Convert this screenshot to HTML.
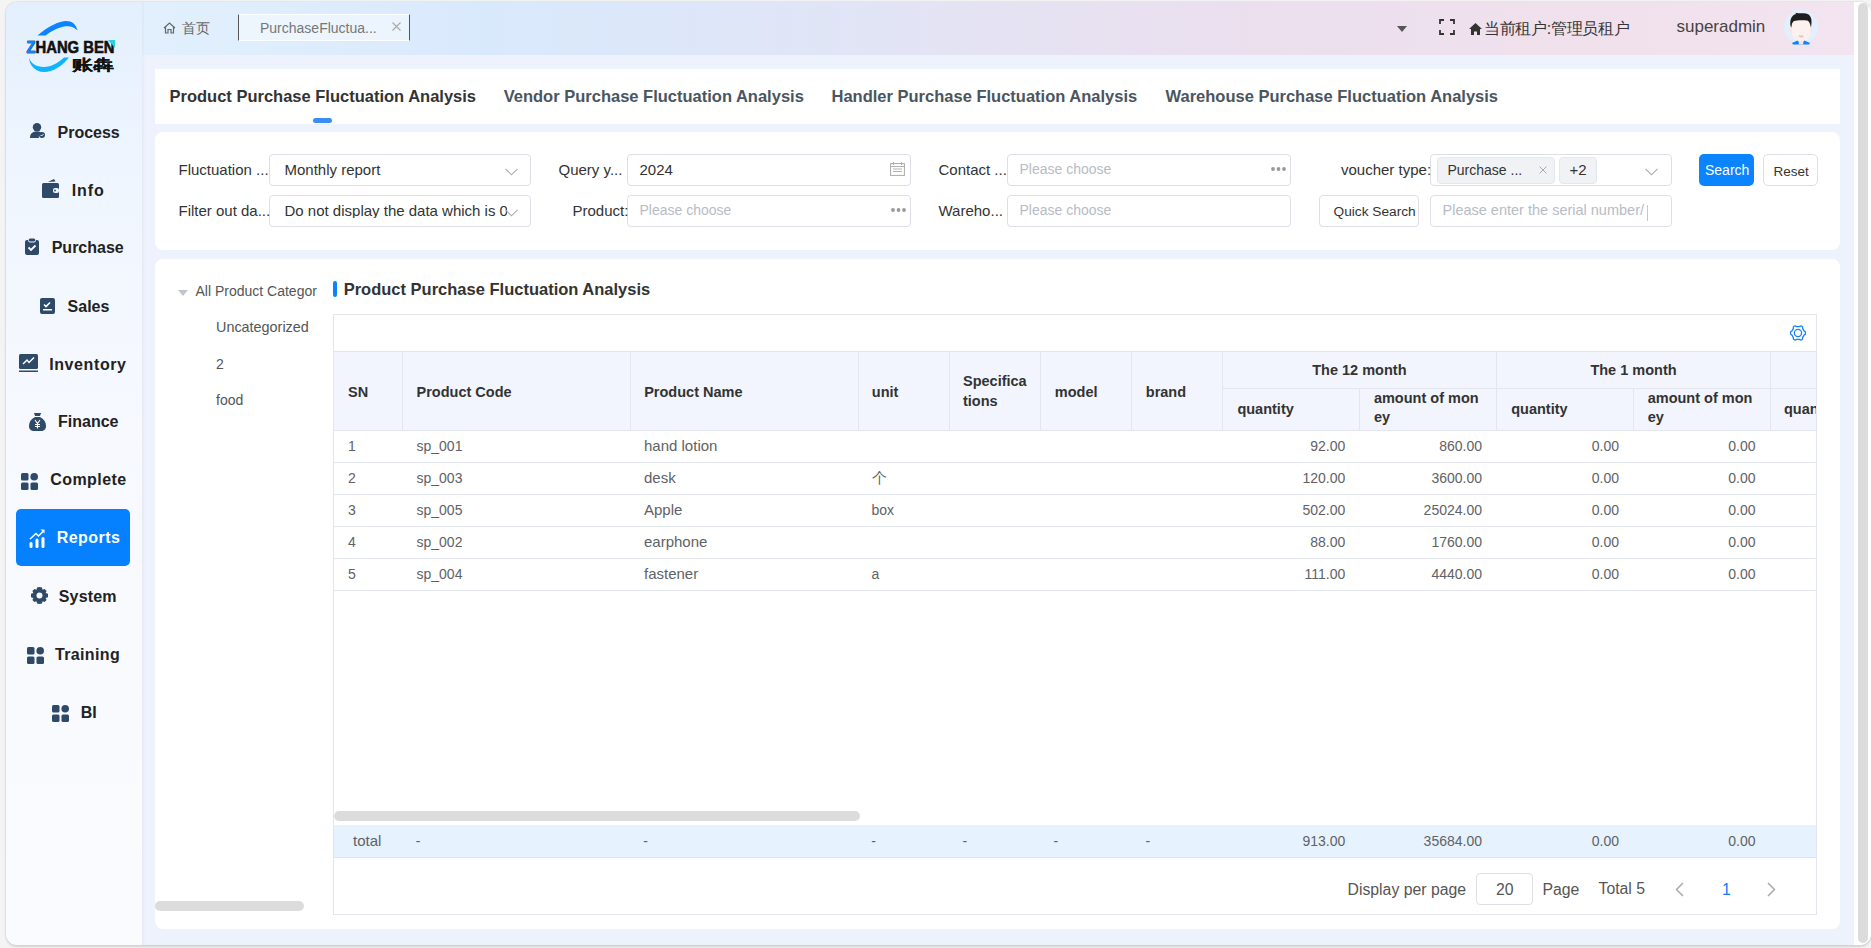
<!DOCTYPE html>
<html><head><meta charset="utf-8">
<style>
*{box-sizing:border-box;margin:0;padding:0}
html,body{width:1871px;height:948px;overflow:hidden;background:#f4f4f4;font-family:"Liberation Sans",sans-serif;color:#333}
.abs{position:absolute}
.t{position:absolute;white-space:nowrap;line-height:1}
#app{position:absolute;left:6px;top:2px;width:1865px;height:943px;border-radius:11px;background:#fff;box-shadow:0 0 1.2px rgba(0,0,0,.28),0 1.5px 3px rgba(0,0,0,.12)}
</style></head><body>
<div id="app"></div>
<div class="abs" style="left:6px;top:2px;width:136px;height:943px;background:linear-gradient(180deg,#e3effd 0%,#eaf3fe 10%,#f0f6fe 20%,#f5f8fe 38%,#f8fafe 60%,#f9fbfe 100%);border-radius:11px 0 0 11px"></div>
<div class="abs" style="left:142px;top:2px;width:1712px;height:53px;background:linear-gradient(90deg,#e2f0fd 0px,#d9e9fc 350px,#e2e4f5 760px,#ebdfee 1100px,#f1e1ec 1500px,#f2e4f0 1712px)"></div>
<div class="abs" style="left:142px;top:55px;width:1712px;height:890px;background:#eef2fc"></div>
<div class="abs" style="left:142px;top:2px;width:3px;height:943px;background:linear-gradient(90deg,rgba(0,0,0,.04),rgba(0,0,0,0))"></div>
<div class="abs" style="left:1854px;top:2px;width:17px;height:943px;background:#fff;border-radius:0 11px 11px 0"></div>
<div class="abs" style="left:1858px;top:3px;width:10px;height:940px;background:#dcdcdc;border-radius:5px"></div>
<div class="abs" style="left:155px;top:69px;width:1685px;height:55px;background:#fff"></div>
<div class="abs" style="left:155px;top:132px;width:1685px;height:118px;background:#fff;border-radius:8px"></div>
<div class="abs" style="left:155px;top:259px;width:1685px;height:670px;background:#fff;border-radius:8px"></div>
<svg class="abs" style="left:20px;top:15px" width="105" height="65" viewBox="0 0 105 65">
<path d="M17.5 20.5 C 28 11, 40 6, 46 6 C 52 6, 56 9, 57.5 15.5 C 54 11.5, 49 10.5, 44 11.5 C 37 13, 30 17, 25.5 20.5 Z" fill="#0a84ff"/>
<path d="M9 42 C 9 50, 15 57, 24 57 C 34 57, 43 50, 49 42.5 L 44 42.5 C 38 48, 31 52, 24 52 C 16 52, 10 48, 9 42 Z" fill="#10b4fb"/>
<text x="6.5" y="38" font-family="Liberation Sans" font-weight="bold" font-size="17" textLength="88" lengthAdjust="spacingAndGlyphs" fill="#111" stroke="#111" stroke-width="0.6">ZHANG BEN</text>
<text x="6.5" y="38" font-family="Liberation Sans" font-weight="bold" font-size="17" textLength="88" lengthAdjust="spacingAndGlyphs" fill="#0a84ff" stroke="#0a84ff" stroke-width="0.6" clip-path="url(#zc)">ZHANG BEN</text>
<clipPath id="zc"><rect x="0" y="0" width="15" height="65"/></clipPath>
<path d="M88 25 L95 25 L95 33 Z" fill="#2ccfdc"/>
<text x="52" y="54.5" font-family="Liberation Sans" font-weight="bold" font-size="14.5" textLength="42" lengthAdjust="spacingAndGlyphs" fill="#111" stroke="#111" stroke-width="0.15">账犇</text>
</svg>
<div class="abs" style="left:16px;top:509px;width:114px;height:57px;background:#0580fe;border-radius:5px"></div>
<div class="t" style="left:57.5px;top:124.8px;font-size:16px;font-weight:bold;color:#222;letter-spacing:0px">Process</div>
<svg class="abs" style="left:30px;top:123px" width="16" height="15" viewBox="0 0 16 15"><circle cx="7" cy="4.2" r="4.2" fill="#2e4a68"/><path d="M0 15 C0 10,3 8.5,7 8.5 C9 8.5,10.5 9,11.5 9.8 A4 4 0 0 0 9 15 Z" fill="#2e4a68"/><circle cx="12" cy="12" r="3" fill="#2e4a68"/><path d="M10.6 12 l1 1 l1.8 -1.8" stroke="#fff" stroke-width="1" fill="none"/></svg>
<div class="t" style="left:71.8px;top:182.5px;font-size:16px;font-weight:bold;color:#222;letter-spacing:0.85px">Info</div>
<svg class="abs" style="left:42.2px;top:178.6px" width="17" height="19" viewBox="0 0 17 19"><path d="M6 3 L12 0 L13.5 2.5 Z" fill="#2e4a68"/><rect x="0" y="4" width="17" height="15" rx="1.5" fill="#2e4a68"/><rect x="11" y="9" width="6" height="5" rx="2" fill="#f3f7fe"/><circle cx="13" cy="11.5" r="0.9" fill="#2e4a68"/></svg>
<div class="t" style="left:51.7px;top:240.2px;font-size:16px;font-weight:bold;color:#222;letter-spacing:0px">Purchase</div>
<svg class="abs" style="left:25.3px;top:238.2px" width="14" height="17" viewBox="0 0 14 17"><rect x="0" y="2" width="14" height="15" rx="2" fill="#2e4a68"/><rect x="3.5" y="0" width="7" height="4" rx="1.5" fill="#2e4a68" stroke="#f3f7fe" stroke-width="1"/><path d="M3.5 9.5 l2.5 2.5 l4.5 -4.5" stroke="#fff" stroke-width="1.8" fill="none"/></svg>
<div class="t" style="left:67.6px;top:298.5px;font-size:16px;font-weight:bold;color:#222;letter-spacing:0px">Sales</div>
<svg class="abs" style="left:40px;top:297.8px" width="15" height="16" viewBox="0 0 15 16"><rect x="0" y="0" width="15" height="16" rx="2" fill="#2e4a68"/><path d="M4 6.5 l2 2 l4 -4" stroke="#fff" stroke-width="1.6" fill="none"/><rect x="3" y="11" width="9" height="1.5" fill="#fff"/></svg>
<div class="t" style="left:49.2px;top:356.9px;font-size:16px;font-weight:bold;color:#222;letter-spacing:0.6px">Inventory</div>
<svg class="abs" style="left:19.3px;top:354.4px" width="19" height="18" viewBox="0 0 19 18"><rect x="0" y="0" width="19" height="15" rx="1.5" fill="#2e4a68"/><path d="M4 10 l4 -4 l2 2.5 l5 -5" stroke="#fff" stroke-width="1.5" fill="none"/><rect x="0" y="16.5" width="19" height="1.5" fill="#2e4a68"/></svg>
<div class="t" style="left:58.0px;top:414.3px;font-size:16px;font-weight:bold;color:#222;letter-spacing:0px">Finance</div>
<svg class="abs" style="left:29.4px;top:412.6px" width="17" height="18" viewBox="0 0 17 18"><path d="M5 0 L12 0 L11 3 L6 3 Z" fill="#2e4a68"/><path d="M6 4 L11 4 C15 6,17 9,17 13 C17 16.5,15 18,12 18 L5 18 C2 18,0 16.5,0 13 C0 9,2 6,6 4 Z" fill="#2e4a68"/><path d="M6 7 l2.5 3.5 l2.5 -3.5 M8.5 10.5 v5 M6 11.5 h5 M6 13.5 h5" stroke="#fff" stroke-width="1.1" fill="none"/></svg>
<div class="t" style="left:50.2px;top:471.7px;font-size:16px;font-weight:bold;color:#222;letter-spacing:0.45px">Complete</div>
<svg class="abs" style="left:21px;top:473px" width="17" height="17" viewBox="0 0 17 17"><rect x="0" y="0" width="7.5" height="7.5" rx="1.5" fill="#2e4a68"/><circle cx="13.2" cy="3.8" r="3.8" fill="#2e4a68"/><rect x="0" y="9.5" width="7.5" height="7.5" rx="1.5" fill="#2e4a68"/><rect x="9.5" y="9.5" width="7.5" height="7.5" rx="1.5" fill="#2e4a68"/></svg>
<div class="t" style="left:56.7px;top:530.4px;font-size:16px;font-weight:bold;color:#fff;letter-spacing:0.45px">Reports</div>
<svg class="abs" style="left:28.6px;top:529px" width="16" height="19" viewBox="0 0 16 19"><path d="M1 10 L7 4.5 L9.5 7 L15 1.5" stroke="#fff" stroke-width="1.5" fill="none"/><path d="M11.5 0.5 L15.5 0.5 L15.5 4.5 Z" fill="#fff"/><rect x="0.5" y="13" width="3" height="6" rx="1.5" fill="#fff"/><rect x="6.5" y="9.5" width="3" height="9.5" rx="1.5" fill="#fff"/><rect x="12.5" y="8" width="3" height="11" rx="1.5" fill="#fff"/></svg>
<div class="t" style="left:58.8px;top:588.9px;font-size:16px;font-weight:bold;color:#222;letter-spacing:0.15px">System</div>
<svg class="abs" style="left:30.6px;top:587.2px" width="17" height="17" viewBox="0 0 17 17"><path d="M8.5 0 L11 0.6 L11.5 2.8 L13.6 2 L15.6 3.9 L14.6 6 L17 6.8 L17 10.2 L14.6 11 L15.6 13.1 L13.6 15 L11.5 14.2 L11 16.4 L8.5 17 L6 16.4 L5.5 14.2 L3.4 15 L1.4 13.1 L2.4 11 L0 10.2 L0 6.8 L2.4 6 L1.4 3.9 L3.4 2 L5.5 2.8 L6 0.6 Z" fill="#2e4a68"/><circle cx="8.5" cy="8.5" r="3" fill="#f6f9fe"/></svg>
<div class="t" style="left:54.9px;top:647.3px;font-size:16px;font-weight:bold;color:#222;letter-spacing:0.38px">Training</div>
<svg class="abs" style="left:26.5px;top:647.3px" width="17" height="17" viewBox="0 0 17 17"><rect x="0" y="0" width="7.5" height="7.5" rx="1.5" fill="#2e4a68"/><circle cx="13.2" cy="3.8" r="3.8" fill="#2e4a68"/><rect x="0" y="9.5" width="7.5" height="7.5" rx="1.5" fill="#2e4a68"/><rect x="9.5" y="9.5" width="7.5" height="7.5" rx="1.5" fill="#2e4a68"/></svg>
<div class="t" style="left:80.8px;top:705.0px;font-size:16px;font-weight:bold;color:#222;letter-spacing:0px">BI</div>
<svg class="abs" style="left:51.9px;top:705px" width="17" height="17" viewBox="0 0 17 17"><rect x="0" y="0" width="7.5" height="7.5" rx="1.5" fill="#2e4a68"/><circle cx="13.2" cy="3.8" r="3.8" fill="#2e4a68"/><rect x="0" y="9.5" width="7.5" height="7.5" rx="1.5" fill="#2e4a68"/><rect x="9.5" y="9.5" width="7.5" height="7.5" rx="1.5" fill="#2e4a68"/></svg>
<svg class="abs" style="left:163px;top:22px" width="13" height="12" viewBox="0 0 13 12"><path d="M1 6 L6.5 1 L12 6 M2.5 5 V11 H5 V7.5 H8 V11 H10.5 V5" stroke="#666" stroke-width="1.2" fill="none"/></svg>
<div class="t" style="left:181.5px;top:20.8px;font-size:14px;font-weight:normal;color:#666;">首页</div>
<div class="abs" style="left:238px;top:14px;width:172px;height:27px;background:rgba(255,255,255,.45);border-left:1.5px solid #555;border-right:1.5px solid #555;border-top:1px solid rgba(255,255,255,.85);border-bottom:1px solid rgba(255,255,255,.85)"></div>
<div class="t" style="left:260.0px;top:20.8px;font-size:14px;font-weight:normal;color:#777;">PurchaseFluctua...</div>
<svg class="abs" style="left:392px;top:22px" width="9" height="9" viewBox="0 0 9 9"><path d="M0.5 0.5 L8.5 8.5 M8.5 0.5 L0.5 8.5" stroke="#aaa" stroke-width="1.1"/></svg>
<svg class="abs" style="left:1397px;top:26px" width="10" height="6" viewBox="0 0 10 6"><path d="M0 0 L10 0 L5 6 Z" fill="#555"/></svg>
<svg class="abs" style="left:1439px;top:19px" width="16" height="16" viewBox="0 0 16 16"><path d="M1 5 V1 H5 M11 1 H15 V5 M15 11 V15 H11 M5 15 H1 V11" stroke="#333" stroke-width="1.8" fill="none"/></svg>
<svg class="abs" style="left:1469px;top:23px" width="13" height="12" viewBox="0 0 13 12"><path d="M6.5 0 L13 6 L11 6 L11 12 L8 12 L8 8.5 L5 8.5 L5 12 L2 12 L2 6 L0 6 Z" fill="#333"/></svg>
<div class="t" style="left:1484.0px;top:20.9px;font-size:16px;font-weight:normal;color:#333;letter-spacing:-0.3px">当前租户:管理员租户</div>
<div class="t" style="left:1676.5px;top:18.3px;font-size:17px;font-weight:normal;color:#444;">superadmin</div>
<svg class="abs" style="left:1784px;top:10px" width="34" height="35" viewBox="0 0 34 35">
<circle cx="17" cy="17" r="17" fill="#e3effc"/>
<ellipse cx="7.6" cy="19.5" rx="1.8" ry="3" fill="#fde3e1"/><ellipse cx="26.4" cy="19.5" rx="1.8" ry="3" fill="#fde3e1"/>
<path d="M8 13 C8 8,12 9.5,17 9.5 C22 9.5,26 8,26 13 L26 23 C26 28,22 31.5,17 31.5 C12 31.5,8 28,8 23 Z" fill="#fdf1f0"/>
<path d="M6.5 16 C5.5 9,8 5,12 4 L11.5 2.8 C15 3.6,19 3,22 3.5 C26 4.2,28 8,27.5 13 L27 17.5 C26 13,25 11,23 10.5 C19 10,13 10,10 11 C8.5 12,7.5 14,7.5 17.5 Z" fill="#1e1e1e"/>
<path d="M14 25.5 Q17 29.5 20 25.5 Z" fill="#f7b9b3"/>
<path d="M8 33 L13.5 30.5 L17 34 L20.5 30.5 L26 33 L25 34.5 L9 34.5 Z" fill="#0a84ff"/>
<rect x="14.8" y="30.5" width="4.4" height="4" fill="#fde3e1"/>
</svg>
<div class="t" style="left:169.5px;top:88.2px;font-size:16.5px;font-weight:bold;color:#333;">Product Purchase Fluctuation Analysis</div>
<div class="t" style="left:503.7px;top:88.2px;font-size:16.5px;font-weight:bold;color:#4a5560;">Vendor Purchase Fluctuation Analysis</div>
<div class="t" style="left:831.5px;top:88.2px;font-size:16.5px;font-weight:bold;color:#4a5560;">Handler Purchase Fluctuation Analysis</div>
<div class="t" style="left:1165.5px;top:88.2px;font-size:16.5px;font-weight:bold;color:#4a5560;">Warehouse Purchase Fluctuation Analysis</div>
<div class="abs" style="left:312.5px;top:118px;width:19px;height:5px;background:#3b8cf6;border-radius:3px"></div>
<div class="abs" style="left:269px;top:154px;width:262px;height:32px;border:1px solid #dcdfe6;border-radius:4px;background:#fff;"></div>
<div class="abs" style="left:269px;top:195px;width:262px;height:32px;border:1px solid #dcdfe6;border-radius:4px;background:#fff;"></div>
<div class="t" style="left:178.5px;top:162.4px;font-size:15px;font-weight:normal;color:#333;">Fluctuation ...</div>
<div class="t" style="left:178.5px;top:203.1px;font-size:15px;font-weight:normal;color:#333;">Filter out da...</div>
<div class="t" style="left:284.5px;top:162.4px;font-size:15px;font-weight:normal;color:#333;">Monthly report</div>
<div class="t" style="left:284.5px;top:203.1px;width:222px;overflow:hidden;font-size:15px;color:#333">Do not display the data which is 0</div>
<svg class="abs" style="left:505px;top:167.5px" width="13" height="8" viewBox="0 0 13 8"><path d="M0.5 0.8 L6.5 6.8 L12.5 0.8" stroke="#aaa" stroke-width="1.1" fill="none"/></svg>
<svg class="abs" style="left:505px;top:208.5px" width="13" height="8" viewBox="0 0 13 8"><path d="M0.5 0.8 L6.5 6.8 L12.5 0.8" stroke="#aaa" stroke-width="1.1" fill="none"/></svg>
<div class="abs" style="left:627px;top:154px;width:284px;height:32px;border:1px solid #dcdfe6;border-radius:4px;background:#fff;"></div>
<div class="abs" style="left:627px;top:195px;width:284px;height:32px;border:1px solid #dcdfe6;border-radius:4px;background:#fff;"></div>
<div class="t" style="left:558.5px;top:162.4px;font-size:15px;font-weight:normal;color:#333;">Query y...</div>
<div class="t" style="left:572.5px;top:203.1px;font-size:15px;font-weight:normal;color:#333;">Product:</div>
<div class="t" style="left:639.5px;top:162.4px;font-size:15px;font-weight:normal;color:#333;">2024</div>
<div class="t" style="left:639.5px;top:203.4px;font-size:14px;font-weight:normal;color:#b7bcc5;">Please choose</div>
<svg class="abs" style="left:890px;top:162px" width="15" height="14" viewBox="0 0 15 14"><rect x="0.6" y="1.6" width="13.8" height="11.8" stroke="#aaa" stroke-width="1" fill="none"/><path d="M0.6 4.5 H14.4 M3 7 H12 M3 9.5 H12 M3.5 0 V3 M11.5 0 V3" stroke="#aaa" stroke-width="0.9"/></svg>
<svg class="abs" style="left:890.5px;top:208.3px" width="15" height="4" viewBox="0 0 15 4"><circle cx="2" cy="2" r="1.9" fill="#999"/><circle cx="7.5" cy="2" r="1.9" fill="#999"/><circle cx="13" cy="2" r="1.9" fill="#999"/></svg>
<div class="abs" style="left:1007px;top:154px;width:284px;height:32px;border:1px solid #dcdfe6;border-radius:4px;background:#fff;"></div>
<div class="abs" style="left:1007px;top:195px;width:284px;height:32px;border:1px solid #dcdfe6;border-radius:4px;background:#fff;"></div>
<div class="t" style="left:938.5px;top:162.4px;font-size:15px;font-weight:normal;color:#333;">Contact ...</div>
<div class="t" style="left:938.5px;top:203.1px;font-size:15px;font-weight:normal;color:#333;">Wareho...</div>
<div class="t" style="left:1019.5px;top:162.4px;font-size:14px;font-weight:normal;color:#b7bcc5;">Please choose</div>
<div class="t" style="left:1019.5px;top:203.3px;font-size:14px;font-weight:normal;color:#b7bcc5;">Please choose</div>
<svg class="abs" style="left:1270.5px;top:167.3px" width="15" height="4" viewBox="0 0 15 4"><circle cx="2" cy="2" r="1.9" fill="#999"/><circle cx="7.5" cy="2" r="1.9" fill="#999"/><circle cx="13" cy="2" r="1.9" fill="#999"/></svg>
<div class="abs" style="left:1430px;top:154px;width:242px;height:32px;border:1px solid #dcdfe6;border-radius:4px;background:#fff;"></div>
<div class="abs" style="left:1430px;top:195px;width:242px;height:32px;border:1px solid #dcdfe6;border-radius:4px;background:#fff;"></div>
<div class="t" style="left:1341.0px;top:162.4px;font-size:15px;font-weight:normal;color:#333;">voucher type:</div>
<div class="abs" style="left:1437px;top:157px;width:118px;height:27px;background:#f0f2f5;border:1px solid #e4e7ed;border-radius:4px"></div>
<div class="t" style="left:1447.5px;top:163.2px;font-size:14px;font-weight:normal;color:#333;">Purchase ...</div>
<svg class="abs" style="left:1538.5px;top:166px" width="8" height="8" viewBox="0 0 8 8"><path d="M0.5 0.5 L7.5 7.5 M7.5 0.5 L0.5 7.5" stroke="#aaa" stroke-width="1"/></svg>
<div class="abs" style="left:1559px;top:157px;width:38px;height:27px;background:#f0f2f5;border:1px solid #e4e7ed;border-radius:4px"></div>
<div class="t" style="left:1569.5px;top:162.4px;font-size:15px;font-weight:normal;color:#333;">+2</div>
<svg class="abs" style="left:1645px;top:167.5px" width="13" height="8" viewBox="0 0 13 8"><path d="M0.5 0.8 L6.5 6.8 L12.5 0.8" stroke="#aaa" stroke-width="1.1" fill="none"/></svg>
<div class="abs" style="left:1319px;top:195px;width:100px;height:32px;border:1px solid #dcdfe6;border-radius:4px;background:#fff"></div>
<div class="t" style="left:1333.5px;top:205.2px;font-size:13.7px;font-weight:normal;color:#333;">Quick Search</div>
<div class="t" style="left:1442.5px;top:202.5px;font-size:14.5px;color:#b7bcc5">Please enter the serial number/</div>
<div class="abs" style="left:1647px;top:205px;width:1px;height:16px;background:#c8c8c8"></div>
<div class="abs" style="left:1699px;top:154px;width:55px;height:32px;background:#0a84ff;border-radius:5px"></div>
<div class="t" style="left:1705.0px;top:162.9px;font-size:14px;font-weight:normal;color:#fff;">Search</div>
<div class="abs" style="left:1763px;top:154px;width:55px;height:32px;border:1px solid #dcdfe6;border-radius:5px;background:#fff"></div>
<div class="t" style="left:1773.5px;top:164.7px;font-size:13.5px;font-weight:normal;color:#333;">Reset</div>
<svg class="abs" style="left:177.5px;top:289.5px" width="10" height="6" viewBox="0 0 10 6"><path d="M0 0 L10 0 L5 6 Z" fill="#c0c4cc"/></svg>
<div class="t" style="left:195.5px;top:284.2px;font-size:14px;color:#555">All Product Categor</div>
<div class="t" style="left:216.0px;top:319.5px;font-size:14.4px;font-weight:normal;color:#555;">Uncategorized</div>
<div class="t" style="left:216.0px;top:356.5px;font-size:14px;font-weight:normal;color:#555;">2</div>
<div class="t" style="left:216.0px;top:392.9px;font-size:14px;font-weight:normal;color:#555;">food</div>
<div class="abs" style="left:155px;top:901px;width:149px;height:10px;background:#dcdcdc;border-radius:5px"></div>
<div class="abs" style="left:333px;top:281px;width:4px;height:16px;background:#0a84ff;border-radius:2px"></div>
<div class="t" style="left:343.7px;top:280.9px;font-size:16.5px;font-weight:bold;color:#333;">Product Purchase Fluctuation Analysis</div>
<div class="abs" style="left:333px;top:314px;width:1484px;height:601px;border:1px solid #e3e6ef;background:#fff"></div>
<svg class="abs" style="left:1789px;top:324px" width="18" height="18" viewBox="0 0 18 18"><path d="M6.2 1.8 L7.6 2.6 L10.4 2.6 L11.8 1.8 L13.6 2.8 L13.6 4.4 L15 6.9 L16.4 7.7 L16.4 10.3 L15 11.1 L13.6 13.6 L13.6 15.2 L11.8 16.2 L10.4 15.4 L7.6 15.4 L6.2 16.2 L4.4 15.2 L4.4 13.6 L3 11.1 L1.6 10.3 L1.6 7.7 L3 6.9 L4.4 4.4 L4.4 2.8 Z" stroke="#1a82f7" stroke-width="1.3" fill="none" stroke-linejoin="round"/><circle cx="9" cy="9" r="3.6" stroke="#1a82f7" stroke-width="1.3" fill="none"/></svg>
<div class="abs" style="left:334px;top:351px;width:1482px;height:80px;background:#f2f5fd;border-top:1px solid #e3e6ef;border-bottom:1px solid #e3e6ef"></div>
<div class="abs" style="left:402px;top:351px;width:1px;height:80px;background:#e3e6ef"></div>
<div class="abs" style="left:630px;top:351px;width:1px;height:80px;background:#e3e6ef"></div>
<div class="abs" style="left:858px;top:351px;width:1px;height:80px;background:#e3e6ef"></div>
<div class="abs" style="left:949px;top:351px;width:1px;height:80px;background:#e3e6ef"></div>
<div class="abs" style="left:1040px;top:351px;width:1px;height:80px;background:#e3e6ef"></div>
<div class="abs" style="left:1131px;top:351px;width:1px;height:80px;background:#e3e6ef"></div>
<div class="abs" style="left:1222px;top:351px;width:1px;height:80px;background:#e3e6ef"></div>
<div class="abs" style="left:1359px;top:351px;width:1px;height:80px;background:#e3e6ef"></div>
<div class="abs" style="left:1496px;top:351px;width:1px;height:80px;background:#e3e6ef"></div>
<div class="abs" style="left:1633px;top:351px;width:1px;height:80px;background:#e3e6ef"></div>
<div class="abs" style="left:1770px;top:351px;width:1px;height:80px;background:#e3e6ef"></div>
<div class="abs" style="left:1222px;top:388px;width:594px;height:1px;background:#e3e6ef"></div>
<div class="abs" style="left:1359px;top:352px;width:1px;height:36px;background:#f2f5fd"></div>
<div class="abs" style="left:1633px;top:352px;width:1px;height:36px;background:#f2f5fd"></div>
<div class="t" style="left:348.0px;top:384.9px;font-size:14.5px;font-weight:bold;color:#333;">SN</div>
<div class="t" style="left:416.5px;top:384.9px;font-size:14.5px;font-weight:bold;color:#333;">Product Code</div>
<div class="t" style="left:644.2px;top:384.9px;font-size:14.5px;font-weight:bold;color:#333;">Product Name</div>
<div class="t" style="left:871.8px;top:384.9px;font-size:14.5px;font-weight:bold;color:#333;">unit</div>
<div class="t" style="left:963.0px;top:374.1px;font-size:14.5px;font-weight:bold;color:#333;">Specifica</div>
<div class="t" style="left:963.0px;top:393.6px;font-size:14.5px;font-weight:bold;color:#333;">tions</div>
<div class="t" style="left:1054.8px;top:384.9px;font-size:14.5px;font-weight:bold;color:#333;">model</div>
<div class="t" style="left:1145.8px;top:384.9px;font-size:14.5px;font-weight:bold;color:#333;">brand</div>
<div class="t" style="left:1059.4px;width:600px;text-align:center;top:362.9px;font-size:14.5px;font-weight:bold;color:#333;">The 12 month</div>
<div class="t" style="left:1333.5px;width:600px;text-align:center;top:362.9px;font-size:14.5px;font-weight:bold;color:#333;">The 1 month</div>
<div class="t" style="left:1237.4px;top:402.2px;font-size:14.5px;font-weight:bold;color:#333;">quantity</div>
<div class="t" style="left:1373.9px;top:391.3px;font-size:14.5px;font-weight:bold;color:#333;">amount of mon</div>
<div class="t" style="left:1373.9px;top:410.4px;font-size:14.5px;font-weight:bold;color:#333;">ey</div>
<div class="t" style="left:1511.2px;top:402.2px;font-size:14.5px;font-weight:bold;color:#333;">quantity</div>
<div class="t" style="left:1647.7px;top:391.3px;font-size:14.5px;font-weight:bold;color:#333;">amount of mon</div>
<div class="t" style="left:1647.7px;top:410.4px;font-size:14.5px;font-weight:bold;color:#333;">ey</div>
<div class="t" style="left:1784px;top:402.2px;width:32px;overflow:hidden;font-size:14.5px;font-weight:bold;color:#333">quantity</div>
<div class="abs" style="left:334px;top:462px;width:1482px;height:1px;background:#e3e6ef"></div>
<div class="t" style="left:348.0px;top:438.7px;font-size:14px;font-weight:normal;color:#606266;">1</div>
<div class="t" style="left:416.5px;top:438.7px;font-size:14px;font-weight:normal;color:#606266;">sp_001</div>
<div class="t" style="left:644.0px;top:437.9px;font-size:15px;font-weight:normal;color:#606266;">hand lotion</div>
<div class="t" style="right:525.7px;top:438.7px;font-size:14px;font-weight:normal;color:#606266;">92.00</div>
<div class="t" style="right:389.0px;top:438.7px;font-size:14px;font-weight:normal;color:#606266;">860.00</div>
<div class="t" style="right:252.0px;top:438.7px;font-size:14px;font-weight:normal;color:#606266;">0.00</div>
<div class="t" style="right:115.5px;top:438.7px;font-size:14px;font-weight:normal;color:#606266;">0.00</div>
<div class="abs" style="left:334px;top:494px;width:1482px;height:1px;background:#e3e6ef"></div>
<div class="t" style="left:348.0px;top:470.7px;font-size:14px;font-weight:normal;color:#606266;">2</div>
<div class="t" style="left:416.5px;top:470.7px;font-size:14px;font-weight:normal;color:#606266;">sp_003</div>
<div class="t" style="left:644.0px;top:469.9px;font-size:15px;font-weight:normal;color:#606266;">desk</div>
<div class="t" style="left:871.5px;top:469.9px;font-size:15px;font-weight:normal;color:#606266;">个</div>
<div class="t" style="right:525.7px;top:470.7px;font-size:14px;font-weight:normal;color:#606266;">120.00</div>
<div class="t" style="right:389.0px;top:470.7px;font-size:14px;font-weight:normal;color:#606266;">3600.00</div>
<div class="t" style="right:252.0px;top:470.7px;font-size:14px;font-weight:normal;color:#606266;">0.00</div>
<div class="t" style="right:115.5px;top:470.7px;font-size:14px;font-weight:normal;color:#606266;">0.00</div>
<div class="abs" style="left:334px;top:526px;width:1482px;height:1px;background:#e3e6ef"></div>
<div class="t" style="left:348.0px;top:502.7px;font-size:14px;font-weight:normal;color:#606266;">3</div>
<div class="t" style="left:416.5px;top:502.7px;font-size:14px;font-weight:normal;color:#606266;">sp_005</div>
<div class="t" style="left:644.0px;top:501.9px;font-size:15px;font-weight:normal;color:#606266;">Apple</div>
<div class="t" style="left:871.5px;top:502.7px;font-size:14px;font-weight:normal;color:#606266;">box</div>
<div class="t" style="right:525.7px;top:502.7px;font-size:14px;font-weight:normal;color:#606266;">502.00</div>
<div class="t" style="right:389.0px;top:502.7px;font-size:14px;font-weight:normal;color:#606266;">25024.00</div>
<div class="t" style="right:252.0px;top:502.7px;font-size:14px;font-weight:normal;color:#606266;">0.00</div>
<div class="t" style="right:115.5px;top:502.7px;font-size:14px;font-weight:normal;color:#606266;">0.00</div>
<div class="abs" style="left:334px;top:558px;width:1482px;height:1px;background:#e3e6ef"></div>
<div class="t" style="left:348.0px;top:534.7px;font-size:14px;font-weight:normal;color:#606266;">4</div>
<div class="t" style="left:416.5px;top:534.7px;font-size:14px;font-weight:normal;color:#606266;">sp_002</div>
<div class="t" style="left:644.0px;top:533.9px;font-size:15px;font-weight:normal;color:#606266;">earphone</div>
<div class="t" style="right:525.7px;top:534.7px;font-size:14px;font-weight:normal;color:#606266;">88.00</div>
<div class="t" style="right:389.0px;top:534.7px;font-size:14px;font-weight:normal;color:#606266;">1760.00</div>
<div class="t" style="right:252.0px;top:534.7px;font-size:14px;font-weight:normal;color:#606266;">0.00</div>
<div class="t" style="right:115.5px;top:534.7px;font-size:14px;font-weight:normal;color:#606266;">0.00</div>
<div class="abs" style="left:334px;top:590px;width:1482px;height:1px;background:#e3e6ef"></div>
<div class="t" style="left:348.0px;top:566.7px;font-size:14px;font-weight:normal;color:#606266;">5</div>
<div class="t" style="left:416.5px;top:566.7px;font-size:14px;font-weight:normal;color:#606266;">sp_004</div>
<div class="t" style="left:644.0px;top:565.9px;font-size:15px;font-weight:normal;color:#606266;">fastener</div>
<div class="t" style="left:871.5px;top:566.7px;font-size:14px;font-weight:normal;color:#606266;">a</div>
<div class="t" style="right:525.7px;top:566.7px;font-size:14px;font-weight:normal;color:#606266;">111.00</div>
<div class="t" style="right:389.0px;top:566.7px;font-size:14px;font-weight:normal;color:#606266;">4440.00</div>
<div class="t" style="right:252.0px;top:566.7px;font-size:14px;font-weight:normal;color:#606266;">0.00</div>
<div class="t" style="right:115.5px;top:566.7px;font-size:14px;font-weight:normal;color:#606266;">0.00</div>
<div class="abs" style="left:334px;top:811px;width:526px;height:10px;background:#dcdcdc;border-radius:5px"></div>
<div class="abs" style="left:334px;top:825px;width:1482px;height:33px;background:#e6f2fd;border-bottom:1.5px solid #e1e4ee"></div>
<div class="t" style="left:353.0px;top:833.1px;font-size:15px;font-weight:normal;color:#606266;">total</div>
<div class="t" style="left:415.8px;top:833.9px;font-size:14px;font-weight:normal;color:#606266;">-</div>
<div class="t" style="left:643.3px;top:833.9px;font-size:14px;font-weight:normal;color:#606266;">-</div>
<div class="t" style="left:871.2px;top:833.9px;font-size:14px;font-weight:normal;color:#606266;">-</div>
<div class="t" style="left:962.5px;top:833.9px;font-size:14px;font-weight:normal;color:#606266;">-</div>
<div class="t" style="left:1053.5px;top:833.9px;font-size:14px;font-weight:normal;color:#606266;">-</div>
<div class="t" style="left:1145.5px;top:833.9px;font-size:14px;font-weight:normal;color:#606266;">-</div>
<div class="t" style="right:525.7px;top:833.9px;font-size:14px;font-weight:normal;color:#606266;">913.00</div>
<div class="t" style="right:389.0px;top:833.9px;font-size:14px;font-weight:normal;color:#606266;">35684.00</div>
<div class="t" style="right:252.0px;top:833.9px;font-size:14px;font-weight:normal;color:#606266;">0.00</div>
<div class="t" style="right:115.5px;top:833.9px;font-size:14px;font-weight:normal;color:#606266;">0.00</div>
<div class="t" style="left:1347.5px;top:881.9px;font-size:15.8px;font-weight:normal;color:#555;">Display per page</div>
<div class="abs" style="left:1476px;top:873px;width:57px;height:32px;border:1px solid #dcdfe6;border-radius:4px;background:#fff"></div>
<div class="t" style="left:1496.0px;top:881.9px;font-size:15.8px;font-weight:normal;color:#555;">20</div>
<div class="t" style="left:1542.5px;top:881.9px;font-size:15.8px;font-weight:normal;color:#555;">Page</div>
<div class="t" style="left:1598.5px;top:880.8px;font-size:15.8px;font-weight:normal;color:#555;">Total 5</div>
<svg class="abs" style="left:1674px;top:882px" width="11" height="15" viewBox="0 0 11 15"><path d="M9 1 L2.5 7.5 L9 14" stroke="#aaa" stroke-width="1.5" fill="none"/></svg>
<div class="t" style="left:1722.0px;top:881.9px;font-size:15.8px;font-weight:normal;color:#1677ff;">1</div>
<svg class="abs" style="left:1765.5px;top:882px" width="11" height="15" viewBox="0 0 11 15"><path d="M2 1 L8.5 7.5 L2 14" stroke="#aaa" stroke-width="1.5" fill="none"/></svg>
</body></html>
